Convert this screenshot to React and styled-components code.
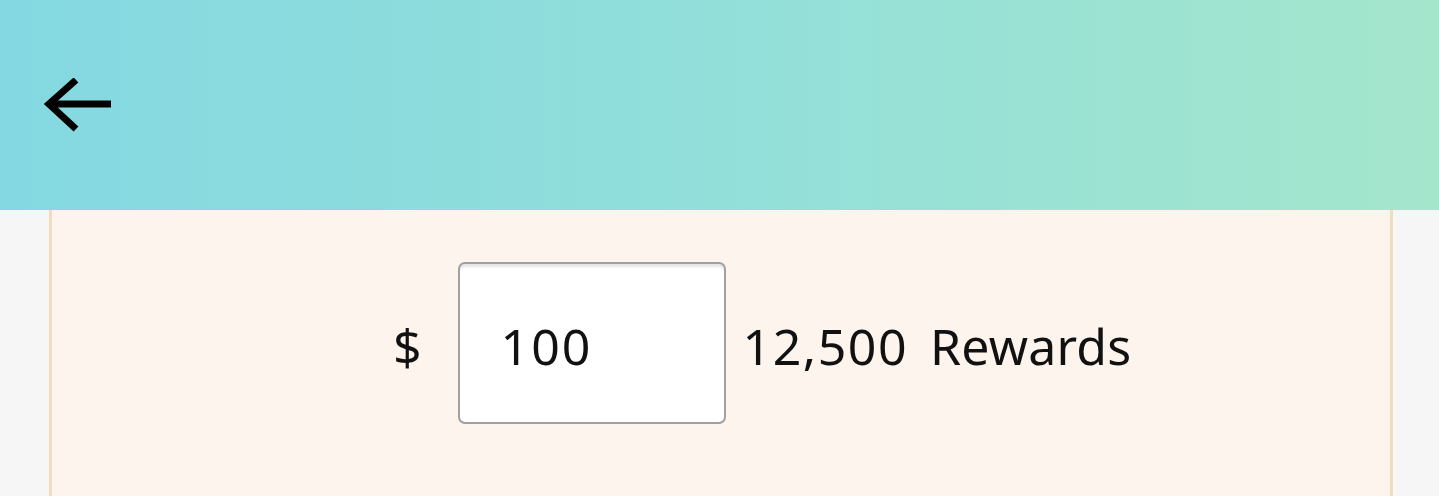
import React, { useState } from 'react';
import styled, { createGlobalStyle } from 'styled-components';

const GlobalStyle = createGlobalStyle`
  html, body {
    margin: 0;
    padding: 0;
    background: #f6f6f6;
    font-family: "Noto Sans", "Open Sans", sans-serif;
    color: #111;
  }
`;

const Header = styled.header`
  height: 210px;
  background: linear-gradient(90deg, #84d8e1 0%, #92dfda 50%, #a4e6cc 100%);
  display: flex;
  align-items: flex-start;
  padding: 78px 0 0 43px;
  box-sizing: border-box;
`;

const BackButton = styled.button`
  border: 0;
  background: none;
  padding: 0;
  width: 70px;
  height: 56px;
  cursor: pointer;
  display: block;
`;

const Card = styled.section`
  margin: 0 46px 0 49px;
  min-height: 300px;
  background: #fcf4ed;
  border-left: 3px solid #f2dcbf;
  border-right: 3px solid #f2dcbf;
`;

const ConvertRow = styled.div`
  display: flex;
  align-items: center;
  padding: 52px 0 0 341px;
  font-size: 50px;
`;

const Currency = styled.span`
  margin: 6px 36px 0 0;
  line-height: 1;
`;

const AmountInput = styled.input`
  width: 268px;
  height: 162px;
  box-sizing: border-box;
  border: 2px solid #a0a0a0;
  border-radius: 7px;
  background: #fff;
  box-shadow: inset 0 4px 2px -1px #e6e6e6;
  padding: 6px 0 0 41px;
  font: inherit;
  letter-spacing: 2px;
  color: #111;
  outline: none;
`;

const Points = styled.span`
  margin: 6px 0 0 17px;
  line-height: 1;
  letter-spacing: 1.5px;
`;

const Unit = styled.span`
  margin: 6px 0 0 22px;
  line-height: 1;
  letter-spacing: 0.2px;
`;

export default function App() {
  const [amount, setAmount] = useState('100');
  const points = (Number(amount) || 0) * 125;

  return (
    <>
      <GlobalStyle />
      <Header>
        <BackButton aria-label="Back">
          <svg width="70" height="56" viewBox="0 0 70 56" fill="none">
            <path d="M68 26H6" stroke="#000" strokeWidth="7" />
            <path d="M33 2L6 26l27 25" stroke="#000" strokeWidth="7" />
          </svg>
        </BackButton>
      </Header>
      <Card>
        <ConvertRow>
          <Currency>$</Currency>
          <AmountInput value={amount} onChange={e => setAmount(e.target.value)} />
          <Points>{points.toLocaleString('en-US')}</Points>
          <Unit>Rewards</Unit>
        </ConvertRow>
      </Card>
    </>
  );
}
